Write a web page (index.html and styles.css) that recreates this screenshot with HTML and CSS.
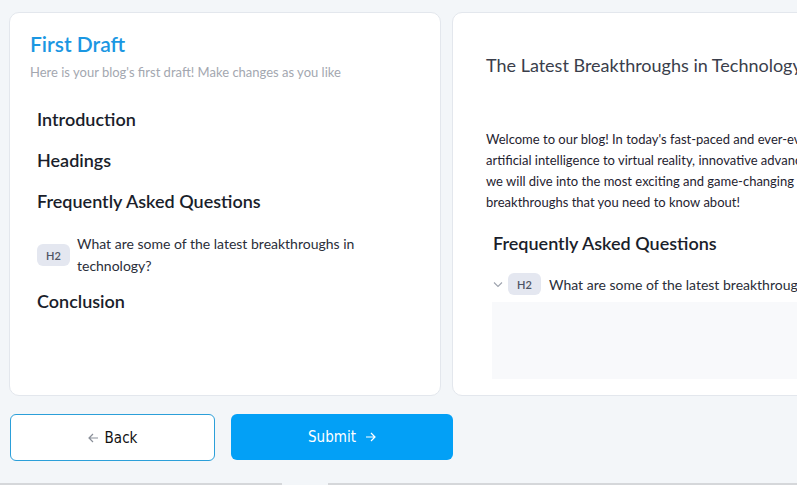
FILE: index.html
```html
<!DOCTYPE html>
<html>
<head>
<meta charset="utf-8">
<link rel="stylesheet" href="styles.css">
</head>
<body>
<div class="page">
  <div class="row">
    <section class="card left">
      <h1 class="title">First Draft</h1>
      <p class="subtitle">Here is your blog's first draft! Make changes as you like</p>
      <ul class="outline">
        <li class="h1">Introduction</li>
        <li class="h1">Headings</li>
        <li class="h1">Frequently Asked Questions</li>
        <li class="q"><span class="badge">H2</span><span class="qtext">What are some of the latest breakthroughs in technology?</span></li>
        <li class="h1">Conclusion</li>
      </ul>
    </section>
    <section class="card right">
      <h2 class="post-title">The Latest Breakthroughs in Technology That Are Changing the World</h2>
      <p class="para">Welcome to our blog! In today's fast-paced and ever-evolving world, technology continues to advance at an incredible pace. From<br>artificial intelligence to virtual reality, innovative advancements are reshaping the way we live. In this blog post,<br>we will dive into the most exciting and game-changing developments in technology, uncovering the latest<br>breakthroughs that you need to know about!</p>
      <h3 class="faq">Frequently Asked Questions</h3>
      <div class="faq-row">
        <svg class="chev" width="10" height="7" viewBox="0 0 10 7"><path d="M1 1.5 L5 5.5 L9 1.5" fill="none" stroke="#9ea3ae" stroke-width="1.1"/></svg>
        <span class="badge">H2</span>
        <span class="faq-q">What are some of the latest breakthroughs in technology?</span>
      </div>
      <div class="answer"></div>
    </section>
  </div>
  <div class="actions">
    <button class="btn back"><svg width="11" height="10" viewBox="0 0 11 10"><path d="M10 5 H1.5 M5 1 L1 5 L5 9" fill="none" stroke="#8a8f99" stroke-width="1.2"/></svg>Back</button>
    <button class="btn submit">Submit<svg width="11" height="10" viewBox="0 0 11 10"><path d="M1 5 H9.5 M6 1 L10 5 L6 9" fill="none" stroke="#ffffff" stroke-width="1.2"/></svg></button>
  </div>
  <div class="bottom-edge"><span class="seg a"></span><span class="seg b"></span></div>
</div>
</body>
</html>
```
FILE: styles.css
```css
html, body {
  margin: 0;
  padding: 0;
  background: #f3f6f9;
  width: 797px;
  height: 485px;
  overflow: hidden;
  font-family: "Lato", "Noto Sans", sans-serif;
}
.page {
  padding: 12px 0 0 9px;
  position: relative;
  height: 485px;
  box-sizing: border-box;
}
.row {
  display: flex;
  gap: 11px;
  height: 384px;
}
.card {
  background: #ffffff;
  border: 1px solid #e3e7ed;
  border-radius: 10px;
  box-sizing: border-box;
  flex-shrink: 0;
}
.left {
  width: 432px;
  padding: 18px 20px;
}
.right {
  width: 420px;
  padding: 40px 0 0 33px;
  overflow: hidden;
  white-space: nowrap;
}
.title {
  margin: 0;
  font-size: 21px;
  font-weight: 600;
  color: #1b97e2;
  line-height: 26px;
}
.subtitle {
  margin: 7px 0 0;
  font-size: 13px;
  color: #a3a7b0;
  line-height: 16px;
}
.outline {
  list-style: none;
  margin: 28px 0 0;
  padding: 0 0 0 7px;
}
.outline .h1 {
  font-size: 18px;
  font-weight: 600;
  color: #1a1e2b;
  line-height: 22px;
  margin-bottom: 19px;
}
.outline .q {
  display: flex;
  align-items: center;
  gap: 7px;
  margin-bottom: 13px;
  margin-top: 21px;
}
.badge {
  flex-shrink: 0;
  display: inline-flex;
  align-items: center;
  justify-content: center;
  width: 33px;
  height: 22px;
  border-radius: 6px;
  background: #e4e7f0;
  color: #4f5463;
  font-size: 11px;
  font-weight: 600;
}
.qtext {
  font-size: 14px;
  line-height: 22px;
  color: #2a2e39;
  width: 300px;
}
.post-title {
  margin: 0;
  font-size: 18px;
  font-weight: 400;
  color: #3a3e4b;
  line-height: 24px;
}
.para {
  margin: 52px 0 0;
  font-size: 13px;
  line-height: 21px;
  color: #1f2330;
}
.faq {
  margin: 18px 0 0 7px;
  font-size: 18px;
  font-weight: 600;
  color: #1a1e2b;
  line-height: 24px;
}
.faq-row {
  display: flex;
  align-items: center;
  margin: 18px 0 0 7px;
}
.chev {
  flex-shrink: 0;
  margin-right: 5px;
}
.faq-row .badge {
  margin-right: 8px;
}
.faq-q {
  font-size: 14px;
  color: #2a2e39;
}
.answer {
  margin: 7px 0 0 6px;
  height: 77px;
  background: #f8f9fb;
}
.actions {
  display: flex;
  gap: 16px;
  margin-top: 18px;
  padding-left: 1px;
}
.btn {
  display: flex;
  align-items: center;
  justify-content: center;
  gap: 6px;
  height: 47px;
  border-radius: 6px;
  font-family: "DejaVu Sans", sans-serif;
  font-stretch: condensed;
  font-size: 15px;
  cursor: pointer;
}
.back {
  width: 205px;
  background: #ffffff;
  border: 1px solid #2b9fd9;
  color: #111111;
}
.submit {
  width: 222px;
  height: 46px;
  background: #03a0f6;
  border: none;
  color: #ffffff;
  gap: 9px;
}
.bottom-edge {
  position: absolute;
  left: 0;
  right: 0;
  bottom: 0;
  height: 2px;
  display: flex;
}
.seg {
  background: #d5d7da;
  height: 2px;
}
.seg.a { width: 282px; }
.seg.b { margin-left: 46px; flex: 1; }
```
